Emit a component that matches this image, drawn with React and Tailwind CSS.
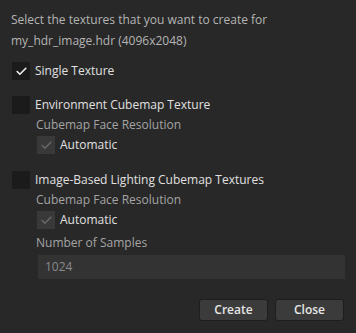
import { Check } from "lucide-react"

function Box({ checked, disabled }) {
  return (
    <div
      className={
        "w-[18px] h-[18px] flex items-center justify-center shrink-0 " +
        (disabled ? "bg-[#393939]" : "bg-[#1b1b1b]")
      }
    >
      {checked && (
        <Check
          size={13}
          strokeWidth={3}
          className={disabled ? "text-[#666666]" : "text-[#f0f0f0]"}
        />
      )}
    </div>
  )
}

function Option({ label, checked, disabled, indent }) {
  return (
    <div className={"h-[20px] flex items-center gap-[5px] " + (indent ? "pl-[37px]" : "pl-[12px]")}>
      <Box checked={checked} disabled={disabled} />
      <span className="text-[#e0e0e0]">{label}</span>
    </div>
  )
}

function Caption({ children }) {
  return <p className="h-[20px] flex items-center pl-[36px] text-[#a4a4a4]">{children}</p>
}

export default function App() {
  return (
    <div
      className="w-[356px] h-[333px] bg-[#282828] text-[12px] leading-[16px]"
      style={{ fontFamily: '"Open Sans", "Noto Sans", sans-serif' }}
    >
      <div className="pt-[9px] pl-[11px] text-[#b4b4b4] leading-[21px]">
        <p>Select the textures that you want to create for</p>
        <p>my_hdr_image.hdr (4096x2048)</p>
      </div>

      <div className="mt-[10px]">
        <Option label="Single Texture" checked />
      </div>

      <div className="mt-[14px]">
        <Option label="Environment Cubemap Texture" />
        <Caption>Cubemap Face Resolution</Caption>
        <Option label="Automatic" checked disabled indent />
      </div>

      <div className="mt-[15px]">
        <Option label="Image-Based Lighting Cubemap Textures" />
        <Caption>Cubemap Face Resolution</Caption>
        <Option label="Automatic" checked disabled indent />
        <div className="mt-[3px]">
          <Caption>Number of Samples</Caption>
        </div>
        <div className="ml-[38px] mr-[11px] mt-[2px] h-[24px] bg-[#333333] flex items-center pl-[7px] text-[#8a8a8a]">
          1024
        </div>
      </div>

      <div className="flex justify-end gap-[7px] mt-[20px] pr-[12px]">
        <button className="w-[69px] h-[22px] rounded-[3px] bg-[#3b3b3b] border border-[#1e1e1e] text-[#e6e6e6] font-semibold">
          Create
        </button>
        <button className="w-[69px] h-[22px] rounded-[3px] bg-[#3b3b3b] border border-[#1e1e1e] text-[#e6e6e6] font-semibold">
          Close
        </button>
      </div>
    </div>
  )
}
